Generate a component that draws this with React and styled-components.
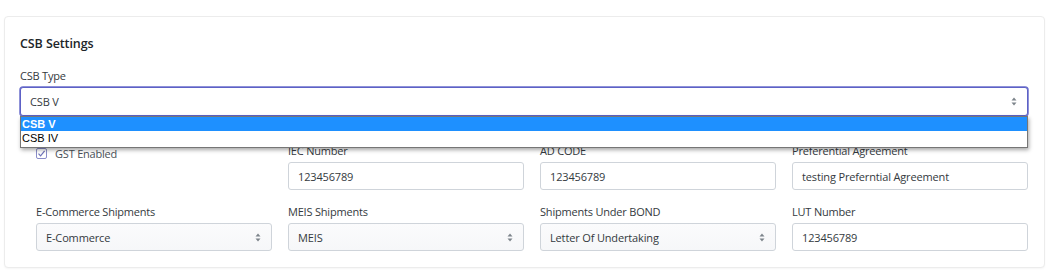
import React from "react";
import styled, { createGlobalStyle } from "styled-components";

const Global = createGlobalStyle`
  * { box-sizing: border-box; }
  body {
    margin: 0;
    background: #ffffff;
    font-family: "Open Sans", "Noto Sans", sans-serif;
    color: #212529;
  }
`;

const Page = styled.div`
  padding: 16px 12px 8px 4px;
`;

const Card = styled.section`
  border: 1px solid #ececec;
  border-radius: 4px;
  background: #fff;
  box-shadow: 0 1px 2px rgba(0, 0, 0, 0.04);
  padding: 19px 16px 16px 15px;
`;

const Title = styled.h2`
  margin: 0 0 16px;
  font-size: 12.5px;
  line-height: 16px;
  font-weight: 600;
  letter-spacing: -0.1px;
  color: #212529;
`;

const Label = styled.label`
  display: block;
  font-size: 11px;
  line-height: 15px;
  letter-spacing: -0.2px;
  color: #343a40;
  margin-bottom: ${(p) => p.$gap || 4}px;
  white-space: nowrap;
`;

const SelectWrap = styled.div`
  position: relative;
`;

const Box = styled.div`
  display: flex;
  align-items: center;
  justify-content: space-between;
  height: ${(p) => (p.$tall ? 29 : 28)}px;
  padding: 0 10px 0 9px;
  border: 1px solid ${(p) => (p.$focus ? "#5d61c6" : "#cfd4da")};
  box-shadow: ${(p) => (p.$focus ? "0 0 0 0.75px #6a6ecb" : "none")};
  border-radius: 3px;
  background: ${(p) =>
    p.$select && !p.$focus ? "linear-gradient(#fbfbfc, #f6f7f9)" : "#fff"};
  font-size: 11px;
  letter-spacing: -0.15px;
  color: #343a40;
`;

const Arrows = styled.svg`
  flex: none;
  width: 6px;
  height: 9px;
`;

const Dropdown = styled.ul`
  position: absolute;
  left: 0;
  right: 0;
  top: 100%;
  margin: 0;
  padding: 0 0 2px;
  list-style: none;
  background: #fff;
  border: 1px solid #767676;
  box-shadow: 1px 2px 4px rgba(0, 0, 0, 0.35);
  z-index: 10;
`;

const Option = styled.li`
  height: 14px;
  line-height: 14px;
  padding-left: 1px;
  font-family: "Liberation Sans", Arial, sans-serif;
  font-size: 11px;
  font-weight: ${(p) => (p.$active ? 700 : 400)};
  color: ${(p) => (p.$active ? "#fff" : "#000")};
  background: ${(p) => (p.$active ? "#1e90ff" : "#fff")};
`;

const Grid = styled.div`
  display: grid;
  grid-template-columns: repeat(4, 1fr);
  column-gap: 16px;
  row-gap: 14px;
  padding: 0 0 0 16px;
  margin-top: 27px;
`;

const Check = styled.div`
  align-self: start;
  display: flex;
  align-items: center;
  gap: 8px;
  padding-top: 3px;
  font-size: 11px;
  line-height: 15px;
  letter-spacing: -0.2px;
  color: #495057;
`;

const CheckBox = styled.span`
  width: 11px;
  height: 11px;
  border: 1px solid #8a8dc9;
  border-radius: 2px;
  display: flex;
  align-items: center;
  justify-content: center;
  background: #fff;
`;

const SelectArrows = () => (
  <Arrows viewBox="0 0 6 9">
    <path d="M3 0.5 L5.5 3.5 H0.5 Z" fill="#7d848b" />
    <path d="M3 8.5 L5.5 5.5 H0.5 Z" fill="#7d848b" />
  </Arrows>
);

const Field = ({ label, value, select }) => (
  <div>
    <Label>{label}</Label>
    <Box $select={select}>
      <span>{value}</span>
      {select && <SelectArrows />}
    </Box>
  </div>
);

export default function App() {
  return (
    <Page>
      <Global />
      <Card>
        <Title>CSB Settings</Title>
        <Label $gap={4}>CSB Type</Label>
        <SelectWrap>
          <Box $tall $focus $select>
            <span>CSB V</span>
            <SelectArrows />
          </Box>
          <Dropdown>
            <Option $active>CSB V</Option>
            <Option>CSB IV</Option>
          </Dropdown>
        </SelectWrap>
        <Grid>
          <Check>
            <CheckBox>
              <svg width="9" height="9" viewBox="0 0 9 9">
                <path
                  d="M1.5 4.6 L3.6 6.8 L7.6 1.8"
                  fill="none"
                  stroke="#6f73b8"
                  strokeWidth="1.2"
                />
              </svg>
            </CheckBox>
            GST Enabled
          </Check>
          <Field label="IEC Number" value="123456789" />
          <Field label="AD CODE" value="123456789" />
          <Field label="Preferential Agreement" value="testing Preferntial Agreement" />
          <Field label="E-Commerce Shipments" value="E-Commerce" select />
          <Field label="MEIS Shipments" value="MEIS" select />
          <Field label="Shipments Under BOND" value="Letter Of Undertaking" select />
          <Field label="LUT Number" value="123456789" />
        </Grid>
      </Card>
    </Page>
  );
}
